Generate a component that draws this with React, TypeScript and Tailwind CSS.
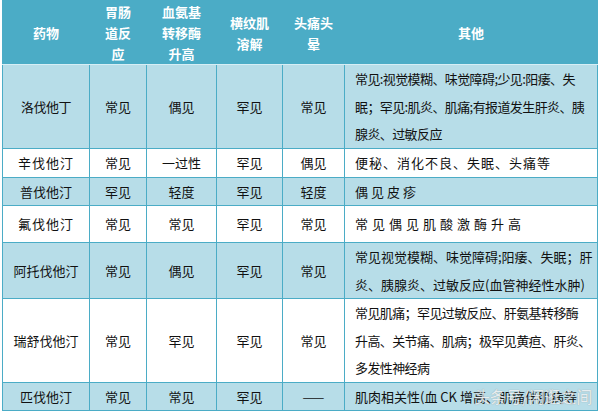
import React from 'react';

interface Row {
  name: string;
  gi: string;
  alt: string;
  rhabdo: string;
  headache: string;
  other: string[];
  height: string;
  shaded: boolean;
  otherClass?: string;
  nameClass?: string;
}

const rows: Row[] = [
  {
    name: '洛伐他丁',
    gi: '常见',
    alt: '偶见',
    rhabdo: '罕见',
    headache: '常见',
    other: ['常见:视觉模糊、味觉障碍;少见:阳痿、失', '眠；罕见:肌炎、肌痛;有报道发生肝炎、胰', '腺炎、过敏反应'],
    height: 'h-[83px]',
    shaded: true,
    otherClass: 'tracking-[-0.6px]',
    nameClass: 'tracking-[-0.5px]'
  },
  {
    name: '辛伐他汀',
    gi: '常见',
    alt: '一过性',
    rhabdo: '罕见',
    headache: '偶见',
    other: ['便秘、消化不良、失眠、头痛等'],
    height: 'h-[29px]',
    shaded: false,
    otherClass: 'tracking-[1px]',
    nameClass: 'tracking-[1px]'
  },
  {
    name: '普伐他汀',
    gi: '罕见',
    alt: '轻度',
    rhabdo: '罕见',
    headache: '轻度',
    other: ['偶见皮疹'],
    height: 'h-[28px]',
    shaded: true,
    otherClass: 'tracking-[3px]'
  },
  {
    name: '氟伐他汀',
    gi: '常见',
    alt: '常见',
    rhabdo: '罕见',
    headache: '常见',
    other: ['常见偶见肌酸激酶升高'],
    height: 'h-[37px]',
    shaded: false,
    otherClass: 'tracking-[4px]',
    nameClass: 'tracking-[1px]'
  },
  {
    name: '阿托伐他汀',
    gi: '常见',
    alt: '偶见',
    rhabdo: '罕见',
    headache: '常见',
    other: ['常见视觉模糊、味觉障碍;阳痿、失眠；肝', '炎、胰腺炎、过敏反应(血管神经性水肿)'],
    height: 'h-[56px]',
    shaded: true
  },
  {
    name: '瑞舒伐他汀',
    gi: '常见',
    alt: '罕见',
    rhabdo: '罕见',
    headache: '常见',
    other: ['常见肌痛；罕见过敏反应、肝氨基转移酶', '升高、关节痛、肌病；极罕见黄疸、肝炎、', '多发性神经病'],
    height: 'h-[83px]',
    shaded: false,
    otherClass: 'tracking-[-0.6px]'
  },
  {
    name: '匹伐他汀',
    gi: '常见',
    alt: '常见',
    rhabdo: '罕见',
    headache: '——',
    other: ['肌肉相关性(血 CK 增高、肌痛伴肌病等'],
    height: 'h-[28px]',
    shaded: true
  }
];

const cell = 'border border-[#4bacc6] p-0 text-center align-middle';

const App: React.FC = () => {
  return (
    <div
      className="relative w-[600px] h-[411px] overflow-hidden bg-white pl-[2px] text-[13px] text-[#111]"
      style={{ fontFamily: '"Noto Sans CJK SC", "Noto Sans", sans-serif' }}
    >
      <table className="w-[595px] table-fixed border-collapse">
        <colgroup>
          <col className="w-[87px]" />
          <col className="w-[57px]" />
          <col className="w-[70px]" />
          <col className="w-[66px]" />
          <col className="w-[62px]" />
          <col className="w-[253px]" />
        </colgroup>
        <thead>
          <tr className="bg-[#4bacc6] text-white font-bold leading-[21px]">
            <th className={`${cell} h-[64px] border-b-[#d6eef5]`}>药物</th>
            <th className={`${cell} border-b-[#d6eef5]`}>
              胃肠
              <br />
              道反
              <br />应
            </th>
            <th className={`${cell} border-b-[#d6eef5]`}>
              血氨基
              <br />
              转移酶
              <br />
              升高
            </th>
            <th className={`${cell} border-b-[#d6eef5]`}>
              横纹肌
              <br />
              溶解
            </th>
            <th className={`${cell} border-b-[#d6eef5]`}>
              头痛头
              <br />晕
            </th>
            <th className={`${cell} border-b-[#d6eef5]`}>其他</th>
          </tr>
        </thead>
        <tbody>
          {rows.map((r) => (
            <tr key={r.name} className={r.shaded ? 'bg-[#b7dde8]' : 'bg-white'}>
              <td className={`${cell} ${r.height} ${r.nameClass ?? ''}`}>{r.name}</td>
              <td className={cell}>{r.gi}</td>
              <td className={cell}>{r.alt}</td>
              <td className={cell}>{r.rhabdo}</td>
              <td className={cell}>{r.headache}</td>
              <td className={`${cell} text-left pl-[10px] leading-[27.5px] whitespace-nowrap ${r.otherClass ?? ''}`}>
                {r.other.map((line, i) => (
                  <div key={i}>{line}</div>
                ))}
              </td>
            </tr>
          ))}
        </tbody>
      </table>
      <span className="absolute left-[474px] top-[386px] text-[16px] leading-[20px] text-[#f2f2f2] opacity-80 [text-shadow:0_0_1px_#888] whitespace-nowrap">
        头条号/闲逛之间
      </span>
    </div>
  );
};

export default App;
